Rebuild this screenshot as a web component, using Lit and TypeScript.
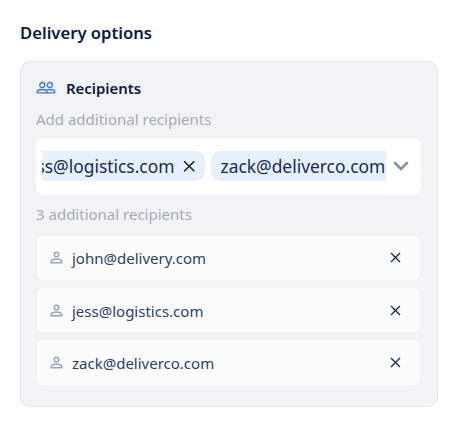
import { LitElement, html, css, svg } from "lit";
import { customElement, property } from "lit/decorators.js";

const cross = svg`<path d="M1 1 L10 10 M10 1 L1 10" />`;

@customElement("email-chip")
class EmailChip extends LitElement {
  @property() email = "";

  static styles = css`
    :host {
      display: flex;
      flex: none;
      align-items: center;
      height: 30px;
      padding: 0 9px 0 9.5px;
      box-sizing: border-box;
      border-radius: 9px;
      background: #e6f1fc;
      color: #1a2953;
      font-size: 17.4px;
      line-height: 30px;
      white-space: nowrap;
    }
    svg {
      width: 12.5px;
      height: 12.5px;
      margin-left: 9px;
      fill: none;
      stroke: #101828;
      stroke-width: 1.25;
    }
  `;

  render() {
    return html`<span>${this.email}</span>
      <svg viewBox="0 0 11 11">${cross}</svg>`;
  }
}

@customElement("recipient-row")
class RecipientRow extends LitElement {
  @property() email = "";

  static styles = css`
    :host {
      display: flex;
      align-items: center;
      height: 44.5px;
      box-sizing: border-box;
      padding: 0 19.5px 0 12.5px;
      border-radius: 6px;
      background: #fbfdfd;
      color: #2d3d65;
      font-size: 15px;
    }
    .person {
      width: 13px;
      height: 13px;
      fill: none;
      stroke: #9ba5b7;
      stroke-width: 1.5;
    }
    .email {
      flex: 1;
      margin-left: 9.5px;
      line-height: 20px;
      padding-top: 1px;
    }
    .remove {
      width: 11px;
      height: 11px;
      fill: none;
      stroke: #14244f;
      stroke-width: 1.25;
    }
  `;

  render() {
    return html`
      <svg class="person" viewBox="0 0 13 13">
        <circle cx="6.5" cy="3.5" r="2.3" />
        <path d="M1.2 11.8 V10.5 C1.2 9 4.2 8 6.5 8 C8.8 8 11.8 9 11.8 10.5 V11.8 Z" />
      </svg>
      <span class="email">${this.email}</span>
      <svg class="remove" viewBox="0 0 11 11">${cross}</svg>
    `;
  }
}

@customElement("app-root")
class AppRoot extends LitElement {
  private recipients = ["john@delivery.com", "jess@logistics.com", "zack@deliverco.com"];

  static styles = css`
    :host {
      display: block;
      box-sizing: border-box;
      height: 431px;
      padding: 21px 12px 0 20px;
      overflow: hidden;
      background: #fff;
      color: #0b1942;
      font-family: "Noto Sans", "Open Sans", sans-serif;
    }
    h1 {
      margin: 0 0 16px;
      font-size: 16.65px;
      line-height: 24px;
      font-weight: 600;
    }
    .panel {
      width: 418px;
      height: 346px;
      box-sizing: border-box;
      padding: 15px 16px 0 15px;
      border: 1px solid #e4e7ee;
      border-radius: 10px;
      background: #f2f3f5;
    }
    .title {
      display: flex;
      align-items: center;
      height: 22px;
    }
    .title svg {
      width: 20px;
      height: 14px;
      fill: none;
      stroke: #3d7bd0;
      stroke-width: 1.3;
    }
    h2 {
      margin: 0 0 0 10px;
      font-size: 14.9px;
      line-height: 22px;
      font-weight: 600;
    }
    .label {
      height: 20px;
      font-size: 15px;
      line-height: 20px;
      color: #a3acbb;
    }
    .add {
      margin-top: 10px;
    }
    .select {
      display: flex;
      align-items: center;
      height: 56px;
      margin-top: 9px;
      box-sizing: border-box;
      padding: 0 12px 0 6px;
      border-radius: 7px;
      background: #fff;
    }
    .chips {
      display: flex;
      gap: 6px;
      width: 344px;
      overflow: hidden;
    }
    .chips email-chip:first-child {
      margin-left: -29.4px;
    }
    .chevron {
      width: 16px;
      height: 10px;
      margin-left: 7px;
      fill: none;
      stroke: #8291a7;
      stroke-width: 2.6;
      stroke-linecap: round;
    }
    .count {
      margin-top: 10px;
    }
    .rows {
      display: grid;
      gap: 7.75px;
      margin: 11.5px 1px 0;
    }
  `;

  render() {
    return html`
      <h1>Delivery options</h1>
      <section class="panel">
        <div class="title">
          <svg viewBox="0 0 20 14">
            <circle cx="6.3" cy="4" r="2.5" />
            <circle cx="13.8" cy="4" r="2.5" />
            <path d="M1.2 11.9 V10.8 C1.2 9.3 4 8.5 6.3 8.5 C8.8 8.5 11 9.4 11 10.8 V11.9 Z" />
            <path d="M10.5 9 C11.4 8.6 12.6 8.5 13.8 8.5 C16.1 8.5 18.8 9.3 18.8 10.8 V11.9 H11" />
          </svg>
          <h2>Recipients</h2>
        </div>
        <div class="label add">Add additional recipients</div>
        <div class="select">
          <div class="chips">
            ${this.recipients.slice(1).map((email) => html`<email-chip .email=${email}></email-chip>`)}
          </div>
          <svg class="chevron" viewBox="0 0 16 10"><path d="M2 2 L8 8 L14 2" /></svg>
        </div>
        <div class="label count">${this.recipients.length} additional recipients</div>
        <div class="rows">
          ${this.recipients.map((email) => html`<recipient-row .email=${email}></recipient-row>`)}
        </div>
      </section>
    `;
  }
}
